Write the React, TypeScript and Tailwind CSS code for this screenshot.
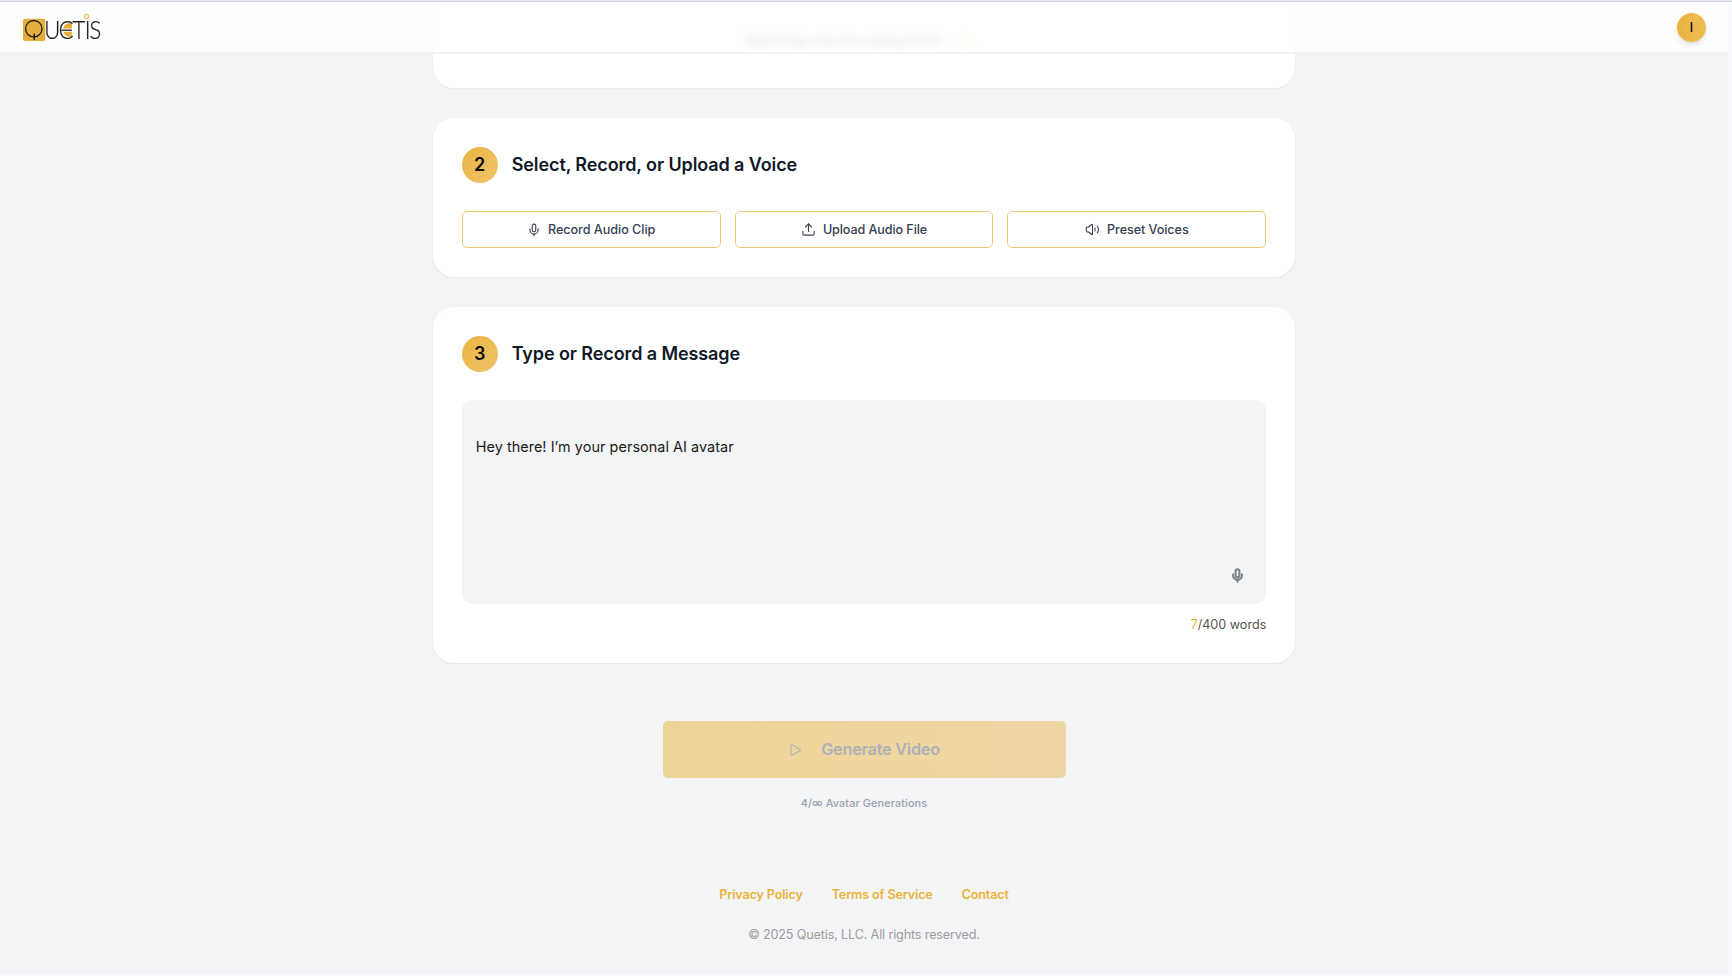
import { useState } from 'react'
import type { ReactNode } from 'react'
import { Mic, Play, Upload } from 'lucide-react'

function Logo() {
  return (
    <svg width="80" height="32" viewBox="0 0 80 32" role="img" aria-label="Quetis">
      <rect x="1" y="6.7" width="22.3" height="22.3" rx="2" fill="#e5ae3c" />
      <circle cx="11.8" cy="16.7" r="8.2" fill="none" stroke="#1c1a14" strokeWidth="1.3" />
      <path d="M12.3 21.5V28" stroke="#1c1a14" strokeWidth="1.4" />
      <path d="M49.9 11V16.5H41.2Q42.3 11 49.9 11ZM49.9 19.8V25.3Q42.3 25 41.2 19.8Z" fill="#e9ae3a" />
      <path d="M39.5 18.2H49.9" stroke="#1c1a14" strokeWidth="1.2" />
      <text
        transform="scale(0.88 1)"
        x="25.3 41.9 57.3 71.2 76.8"
        y="27.1"
        fill="#1c1a14"
        stroke="#1c1a14"
        strokeWidth="0.25"
        fontFamily="Lato, sans-serif"
        fontWeight="300"
        fontSize="25"
      >
        UCTIS
      </text>
      <circle cx="64.5" cy="4.4" r="2.1" fill="#fdf6e6" stroke="#efbf5c" strokeWidth="1.1" />
    </svg>
  )
}

// Outlined speaker with two short sound waves
function SpeakerIcon() {
  return (
    <svg width="15" height="15" viewBox="0 0 24 24" fill="none" stroke="currentColor" strokeWidth="1.7" strokeLinecap="round" strokeLinejoin="round">
      <path d="M2 9.5v5a1.5 1.5 0 0 0 1.5 1.5H6l4.5 4a1 1 0 0 0 1.5-.8V4.8a1 1 0 0 0-1.5-.8L6 8H3.5A1.5 1.5 0 0 0 2 9.5Z" />
      <path d="M16 9.5v5" />
      <path d="M19.5 6.5c2.8 3 2.8 8 0 11" />
    </svg>
  )
}

function StepHeader({ step, title, tracking }: { step: number; title: string; tracking: string }) {
  return (
    <div className="flex items-center gap-3.5 h-9">
      <div className="w-9 h-9 rounded-full bg-gradient-to-br from-[#eab440] to-[#f0c46a] flex items-center justify-center text-lg font-semibold text-[#0a0a0a]">
        {step}
      </div>
      <h2 className={`text-lg font-semibold text-gray-900 whitespace-nowrap ${tracking}`}>{title}</h2>
    </div>
  )
}

function VoiceButton({ icon, label, tracking }: { icon: ReactNode; label: string; tracking: string }) {
  return (
    <button type="button" className={`h-[37px] rounded-[5px] border-[1.5px] border-[#f0c977] bg-white flex items-center justify-center gap-[7px] pt-px text-[12.6px] font-medium text-gray-700 whitespace-nowrap ${tracking}`}>
      <span className="-mt-px">{icon}</span>
      {label}
    </button>
  )
}

function App() {
  const [message, setMessage] = useState('\nHey there! I’m your personal AI avatar')
  const words = message.trim() ? message.trim().split(/\s+/).length : 0

  return (
    <div className="relative w-[1732px] h-[976px] overflow-hidden bg-[#f9faff] font-['Inter','Liberation_Sans',sans-serif]">
      <div className="w-[1728px] h-[974px] bg-gray-100 flex flex-col items-center">
        {/* Step 1, scrolled under the header */}
        <section className="w-[862.6px] h-[87.5px] shrink-0 rounded-b-[21px] bg-white shadow-xs px-[29px]">
          <div className="h-[13px] grid grid-cols-2 gap-3.5">
            <div className="border border-t-0 border-[#f7e0b0] rounded-b-lg" />
            <div className="border border-t-0 border-[#f7e0b0] rounded-b-lg" />
          </div>
          <div className="mt-[18px] pr-2 flex items-center justify-center gap-[18px] text-[12.8px] leading-5 font-medium text-gray-700">
            <span>Need help with the editing flow?</span>
            <span className="w-3.5 h-3.5 rounded-full bg-[#f9e2b4]" />
          </div>
        </section>

        {/* Step 2 */}
        <section className="mt-[30.5px] w-[862.6px] h-[158.5px] shrink-0 rounded-[21px] bg-white shadow-xs px-[29px] pt-[28.5px]">
          <StepHeader step={2} title="Select, Record, or Upload a Voice" tracking="tracking-[-0.1px]" />
          <div className="mt-[28.5px] grid grid-cols-3 gap-3.5">
            <VoiceButton icon={<Mic size={14} strokeWidth={1.9} />} label="Record Audio Clip" tracking="tracking-[-0.03px]" />
            <VoiceButton icon={<Upload size={15} strokeWidth={1.7} />} label="Upload Audio File" tracking="tracking-[-0.1px]" />
            <VoiceButton icon={<SpeakerIcon />} label="Preset Voices" tracking="tracking-[-0.07px]" />
          </div>
        </section>

        {/* Step 3 */}
        <section className="mt-[30.5px] w-[862.6px] h-[355.5px] shrink-0 rounded-[21px] bg-white shadow-xs px-[29px] pt-[28.5px]">
          <StepHeader step={3} title="Type or Record a Message" tracking="tracking-[-0.1px]" />
          <div className="relative mt-[28.5px] h-[204px]">
            <textarea
              value={message}
              onChange={e => setMessage(e.target.value)}
              className="block w-full h-full resize-none rounded-[10px] bg-gray-100 px-3.5 pt-3 text-[14.4px] leading-[23px] tracking-[0.06px] text-[#1c1917] outline-none"
            />
            <button type="button" className="absolute right-[21px] bottom-[21px] text-[#7b818d]">
              <Mic size={15} strokeWidth={3.4} />
            </button>
          </div>
          <div className="mt-3 text-right text-[12.6px] leading-[18px] text-[#57534e]">
            <span className="text-[#eab030]">{words}</span>/400 words
          </div>
        </section>

        <button type="button" disabled className="mt-[58.5px] w-[403px] h-[57px] shrink-0 rounded-[5px] bg-gradient-to-r from-[#efd497] to-[#eed7a4] flex items-center justify-center gap-[19px] text-[16.2px] tracking-[-0.2px] font-semibold text-[#adb0b8]">
          <Play size={14} strokeWidth={2} />
          Generate Video
        </button>
        <p className="mt-[17px] text-[10.8px] leading-[18px] tracking-[0.15px] font-medium text-gray-400">4/∞ Avatar Generations</p>

        <footer className="mt-[73px] flex flex-col items-center">
          <nav className="flex gap-[29px] text-[12.6px] leading-[18px] tracking-[-0.15px] font-semibold text-[#ebb23a]">
            <a href="#privacy">Privacy Policy</a>
            <a href="#terms">Terms of Service</a>
            <a href="#contact">Contact</a>
          </nav>
          <p className="mt-[22px] text-[12.6px] leading-[18px] tracking-[-0.14px] text-[#9b9ba0]">© 2025 Quetis, LLC. All rights reserved.</p>
        </footer>
      </div>

      {/* Header */}
      <header className="absolute top-0 left-0 w-[1728px] h-[54px] border-b-2 border-b-[#f2f3f5] bg-white/85 backdrop-blur-[4px] flex items-center justify-between pl-[22px] pr-[22px] pt-[3px]">
        <Logo />
        <div className="w-[29px] h-[29px] rounded-full bg-gradient-to-r from-[#eab440] to-[#efbd55] shadow-md flex items-center justify-center text-[12.6px] leading-none font-semibold text-[#1c1917]">
          <span className="pt-0.5">I</span>
        </div>
      </header>
      <div className="absolute top-0 left-0 w-full h-0.5 bg-[#e6e9f4] border-b border-[#cdd0db]" />
    </div>
  )
}

export default App
